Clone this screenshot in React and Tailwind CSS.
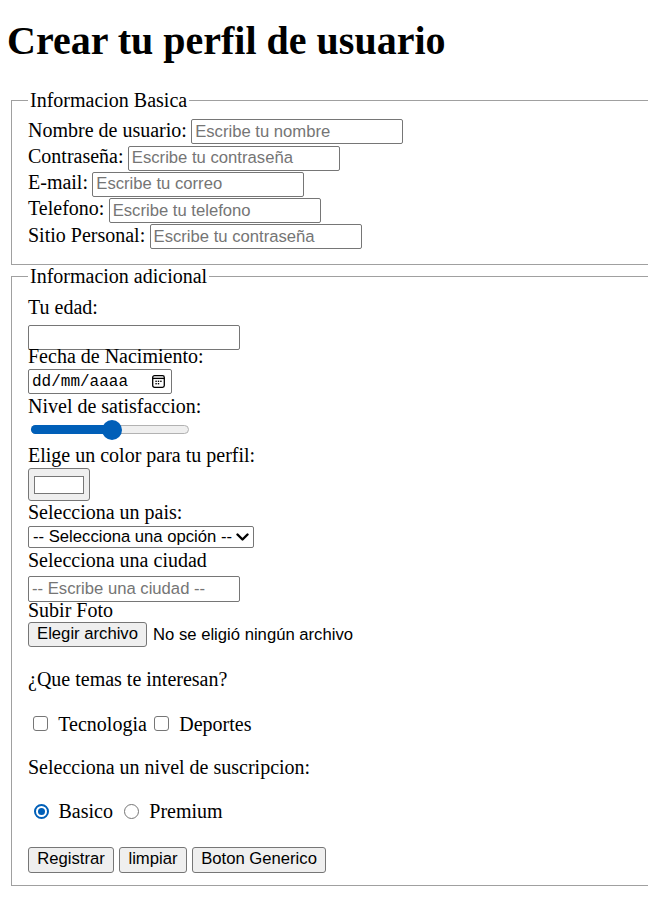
import React from "react";

const sans = "font-['Liberation_Sans',Arial,sans-serif] text-[16.67px]";
const mono = "font-['Liberation_Mono',monospace] text-[16px]";

function TextBox({ placeholder, width = "w-[212px]", className = "" }) {
  return (
    <input
      type="text"
      placeholder={placeholder}
      className={`${sans} ${width} h-[25px] px-[3px] border border-[#767676] rounded-[2px] bg-white text-black placeholder:text-[#757575] outline-none ${className}`}
    />
  );
}

function Row({ label, placeholder }) {
  return (
    <div className="flex items-start h-[26.3px]">
      <span className="leading-[23px] whitespace-nowrap">{label}</span>
      <TextBox placeholder={placeholder} className="ml-[4.3px] mt-[0.8px]" />
    </div>
  );
}

function Label({ children }) {
  return <div className="leading-[23px] h-[23px] whitespace-nowrap">{children}</div>;
}

function Btn({ children }) {
  return (
    <button className={`${sans} h-[25.6px] px-[8.2px] bg-[#efefef] border border-[#767676] rounded-[3px] text-black leading-none`}>
      {children}
    </button>
  );
}

function CalendarIcon() {
  return (
    <svg width="13" height="13" viewBox="0 0 13 13" fill="none">
      <rect x="0.7" y="0.7" width="11.6" height="11.6" rx="1.8" stroke="#000" strokeWidth="1.3" />
      <line x1="0.7" y1="3.4" x2="12.3" y2="3.4" stroke="#000" strokeWidth="1.3" />
      <rect x="3.4" y="5.6" width="1.4" height="1.4" fill="#000" />
      <rect x="5.8" y="5.6" width="1.4" height="1.4" fill="#000" />
      <rect x="8.2" y="5.6" width="1.4" height="1.4" fill="#000" />
      <rect x="3.4" y="8" width="1.4" height="1.4" fill="#000" />
      <rect x="5.8" y="8" width="1.4" height="1.4" fill="#000" />
    </svg>
  );
}

function Checkbox({ className = "" }) {
  return <span className={`block shrink-0 w-[15px] h-[15px] border border-[#767676] rounded-[3px] bg-white ${className}`} />;
}

function Radio({ checked, className = "" }) {
  return checked ? (
    <span className={`flex shrink-0 items-center justify-center w-[15px] h-[15px] rounded-full border-2 border-[#005fb8] bg-white ${className}`}>
      <span className="block w-[7px] h-[7px] rounded-full bg-[#005fb8]" />
    </span>
  ) : (
    <span className={`block shrink-0 w-[15px] h-[15px] rounded-full border border-[#767676] bg-white ${className}`} />
  );
}

export default function App() {
  return (
    <div className="min-h-screen bg-white text-black font-['Liberation_Serif','Times_New_Roman',serif] text-[20px]">
      <h1 className="pl-[7px] pt-[18px] mb-[24.5px] text-[40px] leading-[46px] font-bold whitespace-nowrap">
        Crear tu perfil de usuario
      </h1>

      <fieldset className="ml-[11px] border-y border-l border-[#a0a0a0] pl-[16px] pt-[7px] pb-[14px]">
        <legend className="px-[2px] leading-[23px]">Informacion Basica</legend>
        <Row label="Nombre de usuario:" placeholder="Escribe tu nombre" />
        <Row label="Contraseña:" placeholder="Escribe tu contraseña" />
        <Row label="E-mail:" placeholder="Escribe tu correo" />
        <Row label="Telefono:" placeholder="Escribe tu telefono" />
        <Row label="Sitio Personal:" placeholder="Escribe tu contraseña" />
      </fieldset>

      <fieldset className="ml-[11px] border-y border-l border-[#a0a0a0] pl-[16px] pt-[8px] pb-[12.5px]">
        <legend className="px-[2px] leading-[23px]">Informacion adicional</legend>

        <Label>Tu edad:</Label>
        <div className="h-[26.4px] pt-[1.3px]">
          <TextBox placeholder="" />
        </div>

        <Label>Fecha de Nacimiento:</Label>
        <div className="h-[26.4px] pt-[0.9px]">
          <div className="w-[144px] h-[25px] border border-[#767676] rounded-[2px] flex items-center justify-between pl-[3px] pr-[6px]">
            <span className={`${mono} leading-none`}>dd/mm/aaaa</span>
            <CalendarIcon />
          </div>
        </div>

        <Label>Nivel de satisfaccion:</Label>
        <div className="h-[26.6px] pt-[2px]">
          <div className="relative ml-[3px] w-[158px] h-[20px]">
            <div className="absolute left-0 right-0 top-[5.5px] h-[9px] rounded-full bg-[#efefef] border border-[#b2b2b2]" />
            <div className="absolute left-0 top-[5.5px] w-[81px] h-[9px] rounded-full bg-[#005fb8]" />
            <div className="absolute left-[71px] top-0 w-[20px] h-[20px] rounded-full bg-[#005fb8]" />
          </div>
        </div>

        <Label>Elige un color para tu perfil:</Label>
        <div className="h-[33.6px] pt-[0.9px]">
          <div className="w-[62px] h-[32.7px] bg-[#efefef] border border-[#767676] rounded-[3px] flex items-center justify-center">
            <div className="w-[50px] h-[18px] bg-white border border-[#777]" />
          </div>
        </div>

        <Label>Selecciona un pais:</Label>
        <div className="h-[24.7px] pt-[2.5px]">
          <div className={`${sans} w-[226px] h-[22px] border border-[#767676] rounded-[2px] flex items-center justify-between pl-[4px] pr-[4px] leading-none`}>
            <span>-- Selecciona una opción --</span>
            <svg width="13" height="9" viewBox="0 0 13 9" fill="none">
              <polyline points="1.5,1.5 6.5,6.5 11.5,1.5" stroke="#000" strokeWidth="2.4" strokeLinecap="round" strokeLinejoin="round" />
            </svg>
          </div>
        </div>

        <Label>Selecciona una ciudad</Label>
        <div className="h-[27px] pt-[0.6px]">
          <TextBox placeholder="-- Escribe una ciudad --" className="h-[26px]" />
        </div>

        <Label>Subir Foto</Label>
        <div className="h-[26px] flex items-start">
          <button className={`${sans} h-[25.3px] w-[119px] bg-[#efefef] border border-[#767676] rounded-[3px] text-black leading-none`}>
            Elegir archivo
          </button>
          <span className={`${sans} ml-[6px] leading-[25.3px] whitespace-nowrap`}>No se eligió ningún archivo</span>
        </div>

        <p className="mt-[20px] leading-[23px]">¿Que temas te interesan?</p>

        <div className="mt-[20px] h-[25.3px] flex items-start">
          <Checkbox className="ml-[5.3px] mt-[5px]" />
          <span className="ml-[10px] pt-[2px] leading-[23px]">Tecnologia</span>
          <Checkbox className="ml-[7.4px] mt-[5px]" />
          <span className="ml-[10px] pt-[2px] leading-[23px]">Deportes</span>
        </div>

        <p className="mt-[20px] leading-[23px]">Selecciona un nivel de suscripcion:</p>

        <div className="mt-[20px] h-[26px] flex items-start">
          <Radio checked className="ml-[6px] mt-[5.3px]" />
          <span className="ml-[9.5px] pt-[1px] leading-[23px]">Basico</span>
          <Radio className="ml-[11.4px] mt-[5.3px]" />
          <span className="ml-[10px] pt-[1px] leading-[23px]">Premium</span>
        </div>

        <div className="mt-[20px] h-[28px] pt-[2px] flex items-start gap-[5.3px]">
          <Btn>Registrar</Btn>
          <Btn>limpiar</Btn>
          <Btn>Boton Generico</Btn>
        </div>
      </fieldset>
    </div>
  );
}
